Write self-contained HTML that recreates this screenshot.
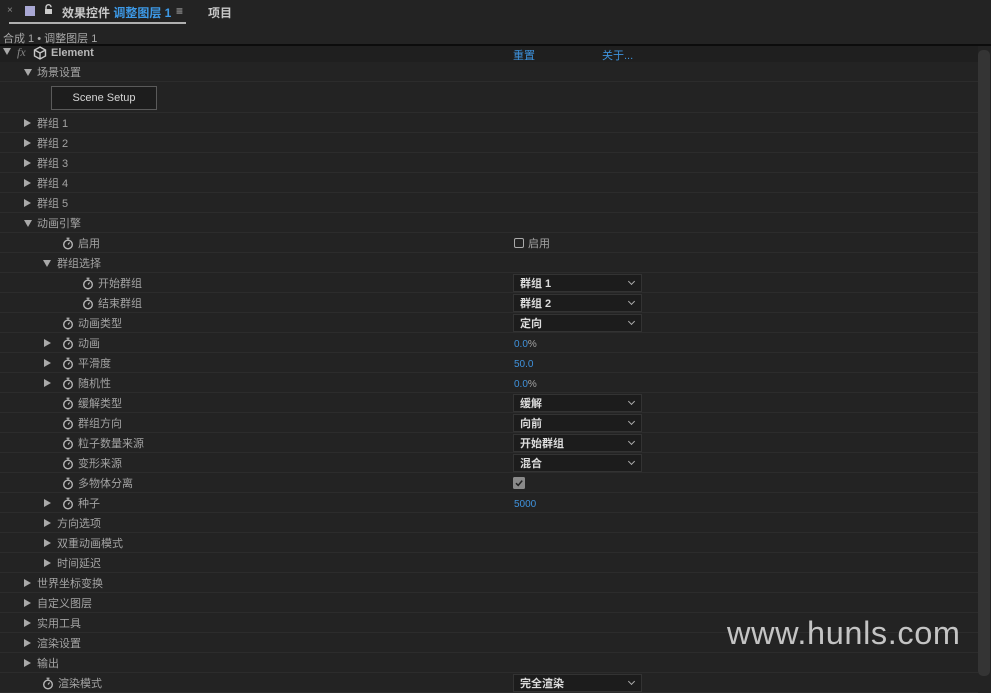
<!DOCTYPE html><html><head><meta charset="utf-8"><style>
*{margin:0;padding:0;box-sizing:border-box}
body{width:991px;height:691px;background:#232323;overflow:hidden;position:relative;font-family:"Liberation Sans","Noto Sans CJK SC",sans-serif;font-size:11px;color:#a3a3a3}
.a{position:absolute;white-space:nowrap}
.r{position:absolute;left:0;width:978px;height:20px;border-bottom:1px solid #2c2c2c}
.t{position:absolute;top:5px;line-height:12px}
.tri{position:absolute;top:6px;width:0;height:0;border-top:4px solid transparent;border-bottom:4px solid transparent;border-left:7px solid #a9a9a9}
.dn{position:absolute;top:7px;width:0;height:0;border-left:4px solid transparent;border-right:4px solid transparent;border-top:7px solid #a9a9a9}
.sw{position:absolute;top:3px;width:12px;height:14px}
.dd{position:absolute;left:513px;top:1px;width:129px;height:18px;background:#1c1c1c;border:1px solid #333;color:#dcdcdc;font-weight:bold;padding:3px 0 0 6px;line-height:12px}
.dd:after{content:"";position:absolute;right:7px;top:4px;width:4px;height:4px;border-right:1px solid #aaa;border-bottom:1px solid #aaa;transform:rotate(45deg)}
.v{position:absolute;left:514px;top:6px;color:#3f92dc;font-size:10px;line-height:12px}
.v i{font-style:normal;color:#a3a3a3}
</style></head><body>
<svg width="0" height="0" style="position:absolute"><defs><g id="s"><circle cx="6" cy="8.5" r="4.3" fill="none" stroke="#b5b5b5" stroke-width="1.4"/><path d="M4.5 2.2h3M6 2.2v2M6 8.5L7.6 6.5" stroke="#b5b5b5" stroke-width="1.2" fill="none"/></g></defs></svg>
<div class="a" style="left:7px;top:5px;color:#888;font-size:10px">×</div>
<div class="a" style="left:25px;top:6px;width:10px;height:10px;background:#a9a8d4"></div>
<svg class="a" style="left:44px;top:4px" width="9" height="11"><path d="M2 5V3.2a2.5 2.5 0 0 1 5 0" fill="none" stroke="#ccc" stroke-width="1.4"/><rect x="1" y="5" width="7" height="5" fill="#ccc"/></svg>
<div class="a" style="left:62px;top:4px;color:#c8c8c8;font-size:12px;font-weight:bold">效果控件 <span style="color:#3d9ae8">调整图层 1</span></div>
<div class="a" style="left:176px;top:4px;color:#bbb;font-size:12px">≡</div>
<div class="a" style="left:9px;top:22px;width:177px;height:2px;background:#b0b0b0"></div>
<div class="a" style="left:208px;top:4px;color:#c8c8c8;font-size:12px;font-weight:bold">项目</div>
<div class="a" style="left:3px;top:30px;color:#a8a8a8;font-size:11px">合成 1 • 调整图层 1</div>
<div class="a" style="left:0;top:44px;width:991px;height:2px;background:#0c0c0c"></div>
<div class="a" style="left:0;top:46px;width:978px;height:16px;background:#1f1f1f"></div>
<div class="dn" style="left:3px;top:48px"></div>
<div class="a" style="left:17px;top:45px;color:#888;font-style:italic;font-family:'Liberation Serif',serif;font-size:12px">fx</div>
<svg class="a" style="left:33px;top:46px" width="14" height="14" viewBox="0 0 14 14"><path d="M7 1L12.5 4V10L7 13L1.5 10V4Z M1.5 4L7 7L12.5 4 M7 7V13" fill="none" stroke="#c8c8c8" stroke-width="1.4"/></svg>
<div class="a" style="left:51px;top:47px;color:#b8b8b8;font-weight:bold">Element</div>
<div class="a" style="left:513px;top:47px;color:#3d92dc">重置</div>
<div class="a" style="left:602px;top:47px;color:#3d92dc">关于...</div>
<div class="a" style="left:978px;top:50px;width:12px;height:626px;background:#343434;border-radius:5px"></div>

<div class="r" style="top:62px"><div class="dn" style="left:24px"></div><div class="t" style="left:37px">场景设置</div></div>
<div class="r" style="top:82px;height:31px"><div class="a" style="left:51px;top:4px;width:106px;height:24px;background:#1d1d1d;border:1px solid #5a5a5a;color:#d6d6d6;text-align:center;line-height:22px">Scene Setup</div></div>
<div class="r" style="top:113px"><div class="tri" style="left:24px"></div><div class="t" style="left:37px">群组 1</div></div>
<div class="r" style="top:133px"><div class="tri" style="left:24px"></div><div class="t" style="left:37px">群组 2</div></div>
<div class="r" style="top:153px"><div class="tri" style="left:24px"></div><div class="t" style="left:37px">群组 3</div></div>
<div class="r" style="top:173px"><div class="tri" style="left:24px"></div><div class="t" style="left:37px">群组 4</div></div>
<div class="r" style="top:193px"><div class="tri" style="left:24px"></div><div class="t" style="left:37px">群组 5</div></div>
<div class="r" style="top:213px"><div class="dn" style="left:24px"></div><div class="t" style="left:37px">动画引擎</div></div>
<div class="r" style="top:233px"><svg class="sw" style="left:62px"><use href="#s"/></svg><div class="t" style="left:78px">启用</div><div class="a" style="left:514px;top:5px;width:10px;height:10px;border:1.5px solid #aaa;border-radius:2px"></div><div class="t" style="left:528px">启用</div></div>
<div class="r" style="top:253px"><div class="dn" style="left:43px"></div><div class="t" style="left:57px">群组选择</div></div>
<div class="r" style="top:273px"><svg class="sw" style="left:82px"><use href="#s"/></svg><div class="t" style="left:98px">开始群组</div><div class="dd">群组 1</div></div>
<div class="r" style="top:293px"><svg class="sw" style="left:82px"><use href="#s"/></svg><div class="t" style="left:98px">结束群组</div><div class="dd">群组 2</div></div>
<div class="r" style="top:313px"><svg class="sw" style="left:62px"><use href="#s"/></svg><div class="t" style="left:78px">动画类型</div><div class="dd">定向</div></div>
<div class="r" style="top:333px"><div class="tri" style="left:44px"></div><svg class="sw" style="left:62px"><use href="#s"/></svg><div class="t" style="left:78px">动画</div><div class="v">0.0<i>%</i></div></div>
<div class="r" style="top:353px"><div class="tri" style="left:44px"></div><svg class="sw" style="left:62px"><use href="#s"/></svg><div class="t" style="left:78px">平滑度</div><div class="v">50.0</div></div>
<div class="r" style="top:373px"><div class="tri" style="left:44px"></div><svg class="sw" style="left:62px"><use href="#s"/></svg><div class="t" style="left:78px">随机性</div><div class="v">0.0<i>%</i></div></div>
<div class="r" style="top:393px"><svg class="sw" style="left:62px"><use href="#s"/></svg><div class="t" style="left:78px">缓解类型</div><div class="dd">缓解</div></div>
<div class="r" style="top:413px"><svg class="sw" style="left:62px"><use href="#s"/></svg><div class="t" style="left:78px">群组方向</div><div class="dd">向前</div></div>
<div class="r" style="top:433px"><svg class="sw" style="left:62px"><use href="#s"/></svg><div class="t" style="left:78px">粒子数量来源</div><div class="dd">开始群组</div></div>
<div class="r" style="top:453px"><svg class="sw" style="left:62px"><use href="#s"/></svg><div class="t" style="left:78px">变形来源</div><div class="dd">混合</div></div>
<div class="r" style="top:473px"><svg class="sw" style="left:62px"><use href="#s"/></svg><div class="t" style="left:78px">多物体分离</div><svg class="a" style="left:513px;top:4px" width="12" height="12"><rect width="12" height="12" rx="1.5" fill="#8a8a8a"/><path d="M3 6.2L5.2 8.4L9.2 3.6" stroke="#222" stroke-width="1.5" fill="none"/></svg></div>
<div class="r" style="top:493px"><div class="tri" style="left:44px"></div><svg class="sw" style="left:62px"><use href="#s"/></svg><div class="t" style="left:78px">种子</div><div class="v">5000</div></div>
<div class="r" style="top:513px"><div class="tri" style="left:44px"></div><div class="t" style="left:57px">方向选项</div></div>
<div class="r" style="top:533px"><div class="tri" style="left:44px"></div><div class="t" style="left:57px">双重动画模式</div></div>
<div class="r" style="top:553px"><div class="tri" style="left:44px"></div><div class="t" style="left:57px">时间延迟</div></div>
<div class="r" style="top:573px"><div class="tri" style="left:24px"></div><div class="t" style="left:37px">世界坐标变换</div></div>
<div class="r" style="top:593px"><div class="tri" style="left:24px"></div><div class="t" style="left:37px">自定义图层</div></div>
<div class="r" style="top:613px"><div class="tri" style="left:24px"></div><div class="t" style="left:37px">实用工具</div></div>
<div class="r" style="top:633px"><div class="tri" style="left:24px"></div><div class="t" style="left:37px">渲染设置</div></div>
<div class="r" style="top:653px"><div class="tri" style="left:24px"></div><div class="t" style="left:37px">输出</div></div>
<div class="r" style="top:673px"><svg class="sw" style="left:42px"><use href="#s"/></svg><div class="t" style="left:58px">渲染模式</div><div class="dd">完全渲染</div></div>
<div class="a" style="left:727px;top:615px;color:#c4c4c4;font-size:32.5px;letter-spacing:0.6px">www.hunls.com</div>
</body></html>
